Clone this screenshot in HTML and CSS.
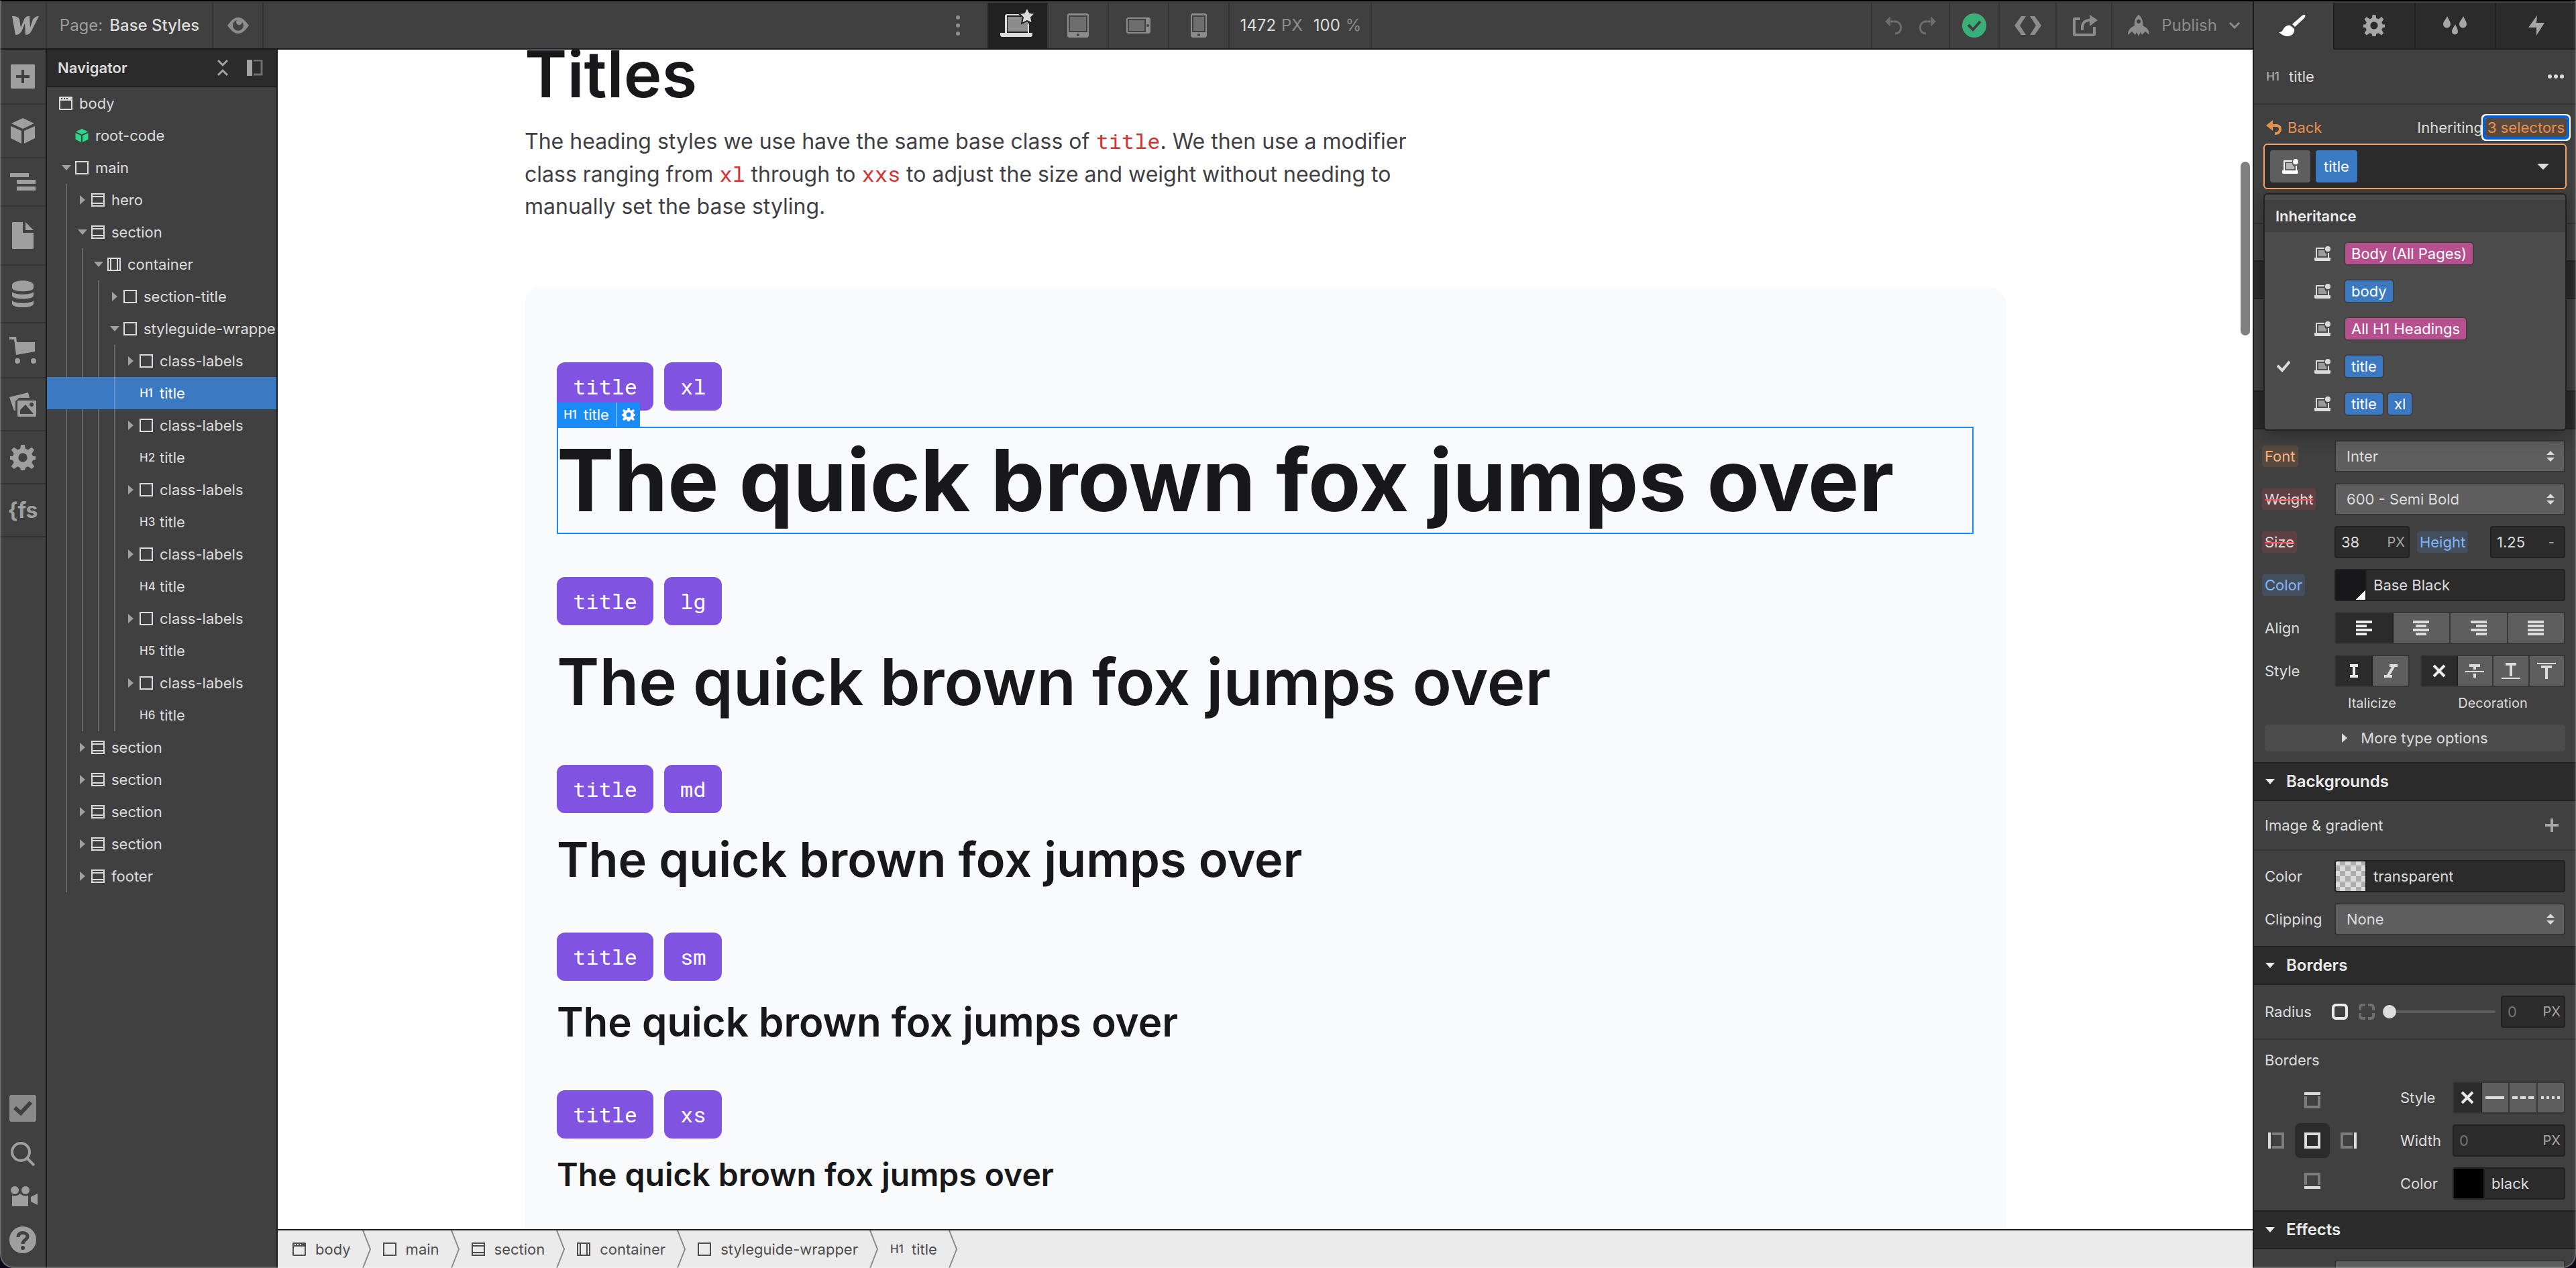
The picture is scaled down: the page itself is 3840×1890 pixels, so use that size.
FILE: index.html
```html
<!DOCTYPE html>
<html lang="en">
<head>
<meta charset="utf-8">
<title>Webflow - Base Styles</title>
<link rel="stylesheet" href="styles.css">
</head>
<body>
<svg class="sprite" aria-hidden="true">
  <symbol id="i-body" viewBox="0 0 20 20"><path fill="currentColor" fill-rule="evenodd" d="M1 0h18l1 1v18l-1 1H1l-1-1V1zM2 6v12h16V6zM3 2v2h2V2zM7 2v2h2V2zM11 2v2h2V2z"/></symbol>
  <symbol id="i-div" viewBox="0 0 20 20"><path fill="none" stroke="currentColor" stroke-width="2" d="M1 1h18v18H1z"/></symbol>
  <symbol id="i-section" viewBox="0 0 20 20"><path fill="none" stroke="currentColor" stroke-width="2" d="M1 1h18v18H1zM1 5h18M1 15h18"/></symbol>
  <symbol id="i-container" viewBox="0 0 20 20"><path fill="none" stroke="currentColor" stroke-width="2" d="M1 1h18v18H1zM5 1v18M15 1v18"/></symbol>
  <symbol id="i-cube" viewBox="0 0 36 38"><path fill="currentColor" d="M18 0l17 8-17 8L1 8zM0 12l16 7v19L0 30zM36 12l-16 7v19l16-8z"/></symbol>
  <symbol id="i-down" viewBox="0 0 14 8"><path fill="currentColor" d="M0 0h14L7 8z"/></symbol>
  <symbol id="i-right" viewBox="0 0 8 14"><path fill="currentColor" d="M0 0v14l8-7z"/></symbol>
  <symbol id="i-sort" viewBox="0 0 12 16"><path fill="currentColor" d="M0 6l6-6 6 6zM0 10l6 6 6-6z"/></symbol>
  <symbol id="i-gear" viewBox="0 0 40 40"><path fill="currentColor" fill-rule="evenodd" d="M17 0h6l1 6 4 2 6-4 4 4-4 6 2 4 6 0v5l-6 1-2 4 4 6-4 4-6-4-4 2-1 6h-6l-1-6-4-2-6 4-4-4 4-6-2-4-6-1v-5l6 0 2-4-4-6 4-4 6 4 4-2zM20 13a7 7 0 1 0 0 14a7 7 0 1 0 0-14z"/></symbol>
  <symbol id="i-device" viewBox="0 0 24 22"><path fill="currentColor" d="M2 3a1 1 0 0 1 1-1h12v2H4v13h16V10h2v7h2v4l-1 1H1l-1-1v-4h2z"/><path fill="currentColor" opacity=".55" d="M6 6h9c0 3 1 4 3 5v4H6z"/><circle cx="20" cy="4" r="4" fill="currentColor"/></symbol>
  <symbol id="i-x" viewBox="0 0 20 20"><path fill="none" stroke="currentColor" stroke-width="4" d="M2 2l16 16M18 2L2 18"/></symbol>
</svg>

<div class="app">
  <div class="workspace">
    <header class="topbar">
      <button class="logo" aria-label="Webflow menu"><svg width="40" height="28" viewBox="0 0 40 28"><path fill="currentColor" d="M40 0c-4 0-7 2-9 5l-4 12L26 0c-4 0-7 2-8 5l-5 12-2-12C10 2 7 0 0 0l5 28c4 0 7-2 9-5l5-12 1 17c4 0 7-2 9-6z"/></svg></button>
      <button class="page-name"><span>Page:</span> Base Styles</button>
      <button class="preview" aria-label="Preview"><svg width="32" height="24" viewBox="0 0 32 24"><path fill="currentColor" fill-rule="evenodd" d="M0 12C6 4 10 0 16 0s10 4 16 12c-6 8-10 12-16 12S6 20 0 12zM14 4a8 8 0 1 0 10 8a8 8 0 0 0-2-5 4.500 4.500 0 1 1-8-3z"/></svg></button>
      <div class="space-left"></div>
      <button class="dots" aria-label="More breakpoints"><svg width="6" height="30" viewBox="0 0 6 30"><path fill="currentColor" d="M3 0a3 3 0 1 1 0 6a3 3 0 1 1 0-6zM3 12a3 3 0 1 1 0 6a3 3 0 1 1 0-6zM3 24a3 3 0 1 1 0 6a3 3 0 1 1 0-6z"/></svg></button>
      <button class="device on" aria-label="Desktop"><svg width="52" height="46" viewBox="0 0 52 46"><path fill="#8c8c8c" d="M11 14h30v22H11z"/><path fill="#dcdcdc" d="M7 12l2-2h24v2H10v26h31V24h2v14h5v4l-2 2H2l-2-2v-4h7z"/><path fill="#dcdcdc" stroke="#212121" stroke-width="2" d="M40 0l4 8 8 1-6 6 2 9-8-4-8 4 2-9-6-6 8-1z"/></svg></button>
      <button class="device" aria-label="Tablet"><svg width="32" height="36" viewBox="0 0 32 36"><path fill="currentColor" fill-rule="evenodd" d="M2 0h28l2 2v32l-2 2H2l-2-2V2zM2 3v25h28V3zM16 30a2 2 0 1 0 0 4a2 2 0 1 0 0-4z"/><path fill="#6e6e6e" d="M4 5h24v21H4z"/></svg></button>
      <button class="device" aria-label="Mobile landscape"><svg width="36" height="24" viewBox="0 0 36 24"><path fill="currentColor" fill-rule="evenodd" d="M2 0h32l2 2v20l-2 2H2l-2-2V2zM2 2v20h27V2zM32 10a2 2 0 1 0 0 4a2 2 0 1 0 0-4z"/><path fill="#6e6e6e" d="M4 4h23v16H4z"/></svg></button>
      <button class="device" aria-label="Mobile portrait"><svg width="24" height="36" viewBox="0 0 24 36"><path fill="currentColor" fill-rule="evenodd" d="M2 0h20l2 2v32l-2 2H2l-2-2V2zM2 3v25h20V3zM12 30a2 2 0 1 0 0 4a2 2 0 1 0 0-4z"/><path fill="#6e6e6e" d="M4 5h16v21H4z"/></svg></button>
      <button class="size">1472 <span>PX</span><b>100</b> <span>%</span></button>
      <div class="space-right"></div>
      <div class="history">
        <button aria-label="Undo"><svg width="26" height="28" viewBox="0 0 26 28"><path fill="none" stroke="currentColor" stroke-width="3" d="M6 8h10c11 2 10 18-1 18"/><path fill="currentColor" d="M0 8l8-8v16z"/></svg></button>
        <button aria-label="Redo"><svg width="26" height="28" viewBox="0 0 26 28"><path fill="none" stroke="currentColor" stroke-width="3" d="M20 8H10C-1 10 0 26 11 26"/><path fill="currentColor" d="M26 8l-8-8v16z"/></svg></button>
      </div>
      <button class="status" aria-label="Saved"><svg width="36" height="36" viewBox="0 0 36 36"><circle cx="18" cy="18" r="18" fill="#3aaf78"/><path fill="none" stroke="#404040" stroke-width="4" d="M9 17l7 7 11-12"/></svg></button>
      <button class="code" aria-label="Export code"><svg width="40" height="28" viewBox="0 0 40 28"><path fill="currentColor" d="M10 0h7L8 14l9 14h-7L0 14zM23 0h7l10 14-10 14h-7l9-14z"/></svg></button>
      <button class="share" aria-label="Share"><svg width="40" height="32" viewBox="0 0 40 32"><path fill="currentColor" d="M3 4h9v4H5v20h26V18h4v12l-2 2H3l-2-2V6z"/><path fill="none" stroke="currentColor" stroke-width="4" d="M15 23c-1-10 3-15 12-15"/><path fill="currentColor" d="M26 0l12 8-12 9z"/></svg></button>
      <button class="publish"><svg width="32" height="32" viewBox="0 0 32 32"><path fill="currentColor" fill-rule="evenodd" d="M16 0c5 4 7 10 6 16l5 3c4 3 5 7 5 11l-6-5-5 5-2-4-3 6-3-6-2 4-5-5-6 5c0-4 1-8 5-11l5-3C9 10 11 4 16 0zm0 7a3 3 0 1 0 0 6a3 3 0 1 0 0-6z"/></svg>Publish<svg width="16" height="10" viewBox="0 0 16 10"><path fill="none" stroke="currentColor" stroke-width="3" d="M1 1l7 7 7-7"/></svg></button>
    </header>

    <div class="middle">
      <nav class="rail">
        <button class="h-add" aria-label="Add"><svg width="36" height="36" viewBox="0 0 36 36"><path fill="currentColor" fill-rule="evenodd" d="M1 0h34l1 1v34l-1 1H1l-1-1V1zM16 8v8H8v4h8v8h4v-8h8v-4h-8V8z"/></svg></button>
        <button class="h-sym" aria-label="Symbols"><svg width="36" height="38"><use href="#i-cube"/></svg></button>
        <button class="h-nav" aria-label="Navigator"><svg width="38" height="26" viewBox="0 0 38 26"><path fill="currentColor" d="M0 0h28v6H0zM10 10h28v6H10zM10 20h28v6H10z"/></svg></button>
        <button class="h-page" aria-label="Pages"><svg width="32" height="40" viewBox="0 0 32 40"><path fill="currentColor" d="M1 0h15v16h16v23l-1 1H1l-1-1V1zM20 0l12 12H20z"/></svg></button>
        <button class="h-db" aria-label="CMS"><svg width="32" height="40" viewBox="0 0 32 40"><path fill="currentColor" d="M0 7C0-2 32-2 32 7v4C32 18 0 18 0 11zM0 17c4 5 28 5 32 0v6c-2 6-30 6-32 0zM0 30c4 5 28 5 32 0v5c-2 7-30 7-32 0z"/></svg></button>
        <button class="h-cart" aria-label="Ecommerce"><svg width="40" height="40" viewBox="0 0 40 40"><path fill="currentColor" d="M0 0h10l1 8h27v14L10 27 7 4H0z"/><circle cx="12" cy="36" r="4" fill="currentColor"/><circle cx="36" cy="36" r="4" fill="currentColor"/></svg></button>
        <button class="h-item" aria-label="Assets"><svg width="40" height="36" viewBox="0 0 40 36"><path fill="currentColor" d="M0 7L28 0l2 8H14L9 13v14H7z"/><path fill="currentColor" fill-rule="evenodd" d="M13 12h26l1 1v22l-1 1H13l-1-1V13zM16 32h20L24 18l-8 8zM33 15a3 3 0 1 0 0 6a3 3 0 1 0 0-6z"/></svg></button>
        <button class="h-item" aria-label="Settings"><svg width="38" height="38"><use href="#i-gear"/></svg></button>
        <button class="h-item fs" aria-label="Finsweet">{fs</button>
        <div class="rail-foot">
          <button aria-label="Audit"><svg width="40" height="40" viewBox="0 0 40 40"><path fill="#8a8a8a" d="M2 0h36l2 2v36l-2 2H2l-2-2V2z"/><path fill="none" stroke="#404040" stroke-width="6" d="M8 19l9 8 15-16"/></svg></button>
          <button aria-label="Search"><svg width="36" height="36" viewBox="0 0 36 36"><circle cx="15" cy="15" r="13" fill="none" stroke="currentColor" stroke-width="4"/><path fill="none" stroke="currentColor" stroke-width="4" d="M24 24l11 11"/></svg></button>
          <button aria-label="Tutorials"><svg width="44" height="30" viewBox="-4 0 44 30"><circle cx="6" cy="6" r="6" fill="currentColor"/><circle cx="22" cy="6" r="6" fill="currentColor"/><path fill="currentColor" d="M2 14c4 2 9 0 12-3 3 3 8 5 12 3v16H2zM30 16l10-5v17l-10-5z"/></svg></button>
          <button aria-label="Help"><svg width="40" height="40" viewBox="0 0 40 40"><circle cx="20" cy="20" r="20" fill="currentColor"/><path fill="none" stroke="#404040" stroke-width="5" d="M13 16c0-9 14-8 14-1 0 5-7 5-7 11"/><circle cx="20" cy="32" r="3" fill="#404040"/></svg></button>
        </div>
      </nav>

      <aside class="navigator">
        <div class="nav-head">
          <h2>Navigator</h2>
          <button aria-label="Collapse all"><svg width="16" height="24" viewBox="0 0 16 24"><path fill="none" stroke="currentColor" stroke-width="3" d="M1 1l7 7 7-7M1 23l7-7 7 7"/></svg></button>
          <button aria-label="Dock"><svg width="24" height="24" viewBox="0 0 24 24"><path fill="currentColor" d="M0 0h8v24H0z"/><path fill="none" stroke="#6e6e6e" stroke-width="3" d="M10 1h12v21H10"/></svg></button>
        </div>
        <ul class="tree">
          <li>
            <div class="row root"><svg class="el"><use href="#i-body"/></svg>body</div>
            <ul class="d1">
              <li><div class="row"><i></i><svg class="el green"><use href="#i-cube"/></svg>root-code</div></li>
              <li>
                <div class="row"><i><svg class="down"><use href="#i-down"/></svg></i><svg class="el"><use href="#i-div"/></svg>main</div>
                <ul class="d2">
                  <li><div class="row"><i><svg class="right"><use href="#i-right"/></svg></i><svg class="el"><use href="#i-section"/></svg>hero</div></li>
                  <li>
                    <div class="row"><i><svg class="down"><use href="#i-down"/></svg></i><svg class="el"><use href="#i-section"/></svg>section</div>
                    <ul class="d3">
                      <li>
                        <div class="row"><i><svg class="down"><use href="#i-down"/></svg></i><svg class="el"><use href="#i-container"/></svg>container</div>
                        <ul class="d4">
                          <li><div class="row"><i><svg class="right"><use href="#i-right"/></svg></i><svg class="el"><use href="#i-div"/></svg>section-title</div></li>
                          <li>
                            <div class="row"><i><svg class="down"><use href="#i-down"/></svg></i><svg class="el"><use href="#i-div"/></svg>styleguide-wrapper</div>
                            <ul class="d5">
                              <li><div class="row"><i><svg class="right"><use href="#i-right"/></svg></i><svg class="el"><use href="#i-div"/></svg>class-labels</div></li>
                              <li><div class="row selected"><i></i><span class="h">H1</span>title</div></li>
                              <li><div class="row"><i><svg class="right"><use href="#i-right"/></svg></i><svg class="el"><use href="#i-div"/></svg>class-labels</div></li>
                              <li><div class="row"><i></i><span class="h">H2</span>title</div></li>
                              <li><div class="row"><i><svg class="right"><use href="#i-right"/></svg></i><svg class="el"><use href="#i-div"/></svg>class-labels</div></li>
                              <li><div class="row"><i></i><span class="h">H3</span>title</div></li>
                              <li><div class="row"><i><svg class="right"><use href="#i-right"/></svg></i><svg class="el"><use href="#i-div"/></svg>class-labels</div></li>
                              <li><div class="row"><i></i><span class="h">H4</span>title</div></li>
                              <li><div class="row"><i><svg class="right"><use href="#i-right"/></svg></i><svg class="el"><use href="#i-div"/></svg>class-labels</div></li>
                              <li><div class="row"><i></i><span class="h">H5</span>title</div></li>
                              <li><div class="row"><i><svg class="right"><use href="#i-right"/></svg></i><svg class="el"><use href="#i-div"/></svg>class-labels</div></li>
                              <li><div class="row"><i></i><span class="h">H6</span>title</div></li>
                            </ul>
                          </li>
                        </ul>
                      </li>
                    </ul>
                  </li>
                  <li><div class="row"><i><svg class="right"><use href="#i-right"/></svg></i><svg class="el"><use href="#i-section"/></svg>section</div></li>
                  <li><div class="row"><i><svg class="right"><use href="#i-right"/></svg></i><svg class="el"><use href="#i-section"/></svg>section</div></li>
                  <li><div class="row"><i><svg class="right"><use href="#i-right"/></svg></i><svg class="el"><use href="#i-section"/></svg>section</div></li>
                  <li><div class="row"><i><svg class="right"><use href="#i-right"/></svg></i><svg class="el"><use href="#i-section"/></svg>section</div></li>
                  <li><div class="row"><i><svg class="right"><use href="#i-right"/></svg></i><svg class="el"><use href="#i-section"/></svg>footer</div></li>
                </ul>
              </li>
            </ul>
          </li>
        </ul>
      </aside>

      <div class="stage">
        <main class="canvas">
          <div class="content">
            <h1 class="heading">Titles</h1>
            <p class="intro">The heading styles we use have the same base class of <code>title</code>. We then use a modifier class ranging from <code>xl</code> through to <code>xxs</code> to adjust the size and weight without needing to manually set the base styling.</p>
            <div class="guide">
              <div class="labels"><code>title</code><code>xl</code></div>
              <div class="picked">
                <div class="badge"><span class="h">H1</span><span>title</span><button aria-label="Element settings"><svg width="20" height="20"><use href="#i-gear"/></svg></button></div>
                <h1 class="title xl">The quick brown fox jumps over</h1>
              </div>
              <div class="labels"><code>title</code><code>lg</code></div>
              <h2 class="title lg">The quick brown fox jumps over</h2>
              <div class="labels"><code>title</code><code>md</code></div>
              <h3 class="title md">The quick brown fox jumps over</h3>
              <div class="labels"><code>title</code><code>sm</code></div>
              <h4 class="title sm">The quick brown fox jumps over</h4>
              <div class="labels"><code>title</code><code>xs</code></div>
              <h5 class="title xs">The quick brown fox jumps over</h5>
            </div>
          </div>
          <div class="scrollbar"></div>
        </main>
        <nav class="crumbs">
          <a href="#body"><svg class="el"><use href="#i-body"/></svg>body</a>
          <svg class="sep" viewBox="0 0 13 56"><path fill="none" stroke="#8c8c8c" stroke-width="2" d="M1 0l11 28L1 56"/></svg>
          <a href="#main"><svg class="el"><use href="#i-div"/></svg>main</a>
          <svg class="sep" viewBox="0 0 13 56"><path fill="none" stroke="#8c8c8c" stroke-width="2" d="M1 0l11 28L1 56"/></svg>
          <a href="#section"><svg class="el"><use href="#i-section"/></svg>section</a>
          <svg class="sep" viewBox="0 0 13 56"><path fill="none" stroke="#8c8c8c" stroke-width="2" d="M1 0l11 28L1 56"/></svg>
          <a href="#container"><svg class="el"><use href="#i-container"/></svg>container</a>
          <svg class="sep" viewBox="0 0 13 56"><path fill="none" stroke="#8c8c8c" stroke-width="2" d="M1 0l11 28L1 56"/></svg>
          <a href="#wrapper"><svg class="el"><use href="#i-div"/></svg>styleguide-wrapper</a>
          <svg class="sep" viewBox="0 0 13 56"><path fill="none" stroke="#8c8c8c" stroke-width="2" d="M1 0l11 28L1 56"/></svg>
          <a href="#title"><span class="h">H1</span>title</a>
          <svg class="sep" viewBox="0 0 13 56"><path fill="none" stroke="#8c8c8c" stroke-width="2" d="M1 0l11 28L1 56"/></svg>
        </nav>
      </div>
    </div>
  </div>

  <aside class="styles">
    <div class="tabs">
      <button class="on" aria-label="Style"><svg width="40" height="32" viewBox="0 0 40 32"><path fill="currentColor" d="M39 0c1 2 0 4-2 6L24 18l-4-4L35 1c2-1 3-1 4-1zM17 16l6 5c1 6-3 10-9 11-6 0-9-2-14-6 4 0 5-1 7-5 2-3 5-6 10-5z"/></svg></button>
      <button aria-label="Settings"><svg width="32" height="32"><use href="#i-gear"/></svg></button>
      <button aria-label="Style manager"><svg width="36" height="28" viewBox="0 0 36 28"><path fill="currentColor" d="M6 0c2 5 5 8 5 12a5 5 0 0 1-11 0C0 8 4 5 6 0zM30 0c2 5 5 8 5 12a5 5 0 0 1-11 0C24 8 28 5 30 0zM18 12c2 5 4 7 4 11a4 4 0 0 1-9 0c0-4 3-6 5-11z"/></svg></button>
      <button aria-label="Interactions"><svg width="24" height="30" viewBox="0 0 24 30"><path fill="currentColor" d="M13 0l-1 11h12L12 30v-12H0z"/></svg></button>
    </div>
    <div class="crown"><span class="h">H1</span><span class="name">title</span><button aria-label="More"><svg width="24" height="6" viewBox="0 0 24 6"><path fill="currentColor" d="M3 0a3 3 0 1 1 0 6a3 3 0 1 1 0-6zM12 0a3 3 0 1 1 0 6a3 3 0 1 1 0-6zM21 0a3 3 0 1 1 0 6a3 3 0 1 1 0-6z"/></svg></button></div>
    <div class="selector">
      <div class="inherit">
        <button class="back"><svg width="24" height="22" viewBox="0 0 24 22"><path fill="none" stroke="currentColor" stroke-width="4" d="M7 8h9c7 0 7 12-2 12h-1"/><path fill="currentColor" d="M0 8l10-8v16z"/></svg>Back</button>
        <span class="inheriting">Inheriting</span><button class="count">3 selectors</button>
      </div>
      <div class="field">
        <button class="dev" aria-label="All breakpoints"><svg class="laptop"><use href="#i-device"/></svg></button>
        <span class="chip">title</span>
        <button class="caret" aria-label="Open"><svg width="18" height="9" viewBox="0 0 18 9"><path fill="currentColor" d="M0 0h18L9 9z"/></svg></button>
        <div class="menu">
          <h3>Inheritance</h3>
          <ul>
            <li><i></i><svg class="laptop"><use href="#i-device"/></svg><span class="tag pink">Body (All Pages)</span></li>
            <li><i></i><svg class="laptop"><use href="#i-device"/></svg><span class="tag">body</span></li>
            <li><i></i><svg class="laptop"><use href="#i-device"/></svg><span class="tag pink">All H1 Headings</span></li>
            <li><i><svg width="20" height="18" viewBox="0 0 20 18"><path fill="none" stroke="currentColor" stroke-width="4" d="M1 8l7 7L19 2"/></svg></i><svg class="laptop"><use href="#i-device"/></svg><span class="tag">title</span></li>
            <li><i></i><svg class="laptop"><use href="#i-device"/></svg><span class="tag">title</span><span class="tag">xl</span></li>
          </ul>
        </div>
      </div>
    </div>
    <div class="shut"></div>
    <div class="group empty"></div>
    <div class="blank"></div>
    <div class="group empty"></div>

    <section class="props">
      <div class="prop"><label class="orange" for="font">Font</label><div class="pick"><select id="font"><option>Inter</option></select><svg><use href="#i-sort"/></svg></div></div>
      <div class="prop"><label class="red" for="weight">Weight</label><div class="pick"><select id="weight"><option>600 - Semi Bold</option></select><svg><use href="#i-sort"/></svg></div></div>
      <div class="prop"><label class="red" for="size">Size</label>
        <div class="pair"><div class="num"><input id="size" value="38"><span>PX</span></div><label class="blue" for="height">Height</label><div class="num"><input id="height" value="1.25"><span class="dash">-</span></div></div></div>
      <div class="prop"><label class="blue" for="color">Color</label><div class="color"><span class="swatch ink"></span><input id="color" value="Base Black"></div></div>
      <div class="prop"><span>Align</span>
        <div class="seg">
          <button class="on" aria-label="Left"><svg width="24" height="22"><path fill="currentColor" d="M0 0h24v4H0zM0 6h16v4H0zM0 12h24v4H0zM0 18h16v4H0z"/></svg></button>
          <button aria-label="Center"><svg width="24" height="22"><path fill="currentColor" d="M0 0h24v4H0zM4 6h16v4H4zM0 12h24v4H0zM4 18h16v4H4z"/></svg></button>
          <button aria-label="Right"><svg width="24" height="22"><path fill="currentColor" d="M0 0h24v4H0zM8 6h16v4H8zM0 12h24v4H0zM8 18h16v4H8z"/></svg></button>
          <button aria-label="Justify"><svg width="24" height="22"><path fill="currentColor" d="M0 0h24v4H0zM0 6h24v4H0zM0 12h24v4H0zM0 18h24v4H0z"/></svg></button>
        </div></div>
      <div class="prop"><span>Style</span>
        <div class="duo">
          <div class="seg">
            <button class="on" aria-label="Regular"><svg width="12" height="20"><path fill="currentColor" d="M0 0h12v4H8v12h4v4H0v-4h4V4H0z"/></svg></button>
            <button aria-label="Italic"><svg width="20" height="20"><path fill="currentColor" d="M8 0h12v4h-4L9 16h3v4H0v-4h4l7-12H8z"/></svg></button>
          </div>
          <div class="seg">
            <button class="on" aria-label="None"><svg width="20" height="20"><use href="#i-x"/></svg></button>
            <button aria-label="Strikethrough"><svg width="28" height="20"><path fill="currentColor" d="M6 0h16v4h-6v4h-4V4H6zM0 10h28v2H0zM12 14h4v6h-4z"/></svg></button>
            <button aria-label="Underline"><svg width="28" height="24"><path fill="currentColor" d="M6 0h16v4h-6v16h-4V4H6zM0 22h28v2H0z"/></svg></button>
            <button aria-label="Overline"><svg width="28" height="24"><path fill="currentColor" d="M0 0h28v2H0zM6 4h16v4h-6v16h-4V8H6z"/></svg></button>
          </div>
        </div></div>
      <div class="captions duo"><span>Italicize</span><span>Decoration</span></div>
      <button class="more"><svg width="8" height="16" viewBox="0 0 8 14"><use href="#i-right"/></svg>More type options</button>
    </section>

    <h2 class="group"><svg class="tri"><use href="#i-down"/></svg>Backgrounds</h2>
    <div class="adder"><span>Image &amp; gradient</span><button aria-label="Add background"><svg width="20" height="20"><path fill="currentColor" d="M8 0h4v8h8v4h-8v8H8v-8H0V8h8z"/></svg></button></div>
    <section class="props">
      <div class="prop"><label for="bg">Color</label><div class="color"><span class="swatch clear"></span><input id="bg" value="transparent"></div></div>
      <div class="prop"><label for="clip">Clipping</label><div class="pick"><select id="clip"><option>None</option></select><svg><use href="#i-sort"/></svg></div></div>
    </section>

    <h2 class="group"><svg class="tri"><use href="#i-down"/></svg>Borders</h2>
    <div class="radius">
      <label for="radius">Radius</label>
      <button aria-label="All corners"><svg width="24" height="24"><rect x="2" y="2" width="20" height="20" rx="4" fill="none" stroke="#ebebeb" stroke-width="4"/></svg></button>
      <button aria-label="Single corners"><svg width="24" height="24"><path fill="none" stroke="#6e6e6e" stroke-width="4" d="M2 10V6q0-4 4-4h4M14 2h4q4 0 4 4v4M22 14v4q0 4-4 4h-4M10 22H6q-4 0-4-4v-4"/></svg></button>
      <input type="range" min="0" max="100" value="0" aria-label="Radius amount">
      <div class="num"><input id="radius" placeholder="0"><span>PX</span></div>
    </div>
    <section class="edges">
      <h3>Borders</h3>
      <div class="edge-grid">
        <div class="sides">
          <span></span><button aria-label="Top"><svg width="24" height="24"><path fill="#dcdcdc" d="M0 0h24v4H0z"/><path fill="#7c7c7c" d="M0 6h4v14h16V6h4v18H0z"/></svg></button><span></span>
          <button aria-label="Left"><svg width="24" height="24"><path fill="#dcdcdc" d="M0 0h4v24H0z"/><path fill="#7c7c7c" d="M6 0h18v24H6v-4h14V4H6z"/></svg></button>
          <button class="all" aria-label="All sides"><svg width="24" height="24"><path fill="none" stroke="#dcdcdc" stroke-width="4" d="M2 2h20v20H2z"/></svg></button>
          <button aria-label="Right"><svg width="24" height="24"><path fill="#dcdcdc" d="M20 0h4v24h-4z"/><path fill="#7c7c7c" d="M18 0H0v24h18v-4H4V4h14z"/></svg></button>
          <span></span><button aria-label="Bottom"><svg width="24" height="24"><path fill="#dcdcdc" d="M0 20h24v4H0z"/><path fill="#7c7c7c" d="M0 18V0h24v18h-4V4H4v14z"/></svg></button><span></span>
        </div>
        <div class="edge-props">
          <span>Style</span>
          <div class="seg">
            <button class="on" aria-label="None"><svg width="20" height="20"><use href="#i-x"/></svg></button>
            <button aria-label="Solid"><svg width="28" height="4"><path fill="currentColor" d="M0 0h28v4H0z"/></svg></button>
            <button aria-label="Dashed"><svg width="32" height="4"><path fill="currentColor" d="M0 0h8v4H0zM12 0h8v4h-8zM24 0h8v4h-8z"/></svg></button>
            <button aria-label="Dotted"><svg width="28" height="4"><path fill="currentColor" d="M0 0h4v4H0zM8 0h4v4H8zM16 0h4v4h-4zM24 0h4v4h-4z"/></svg></button>
          </div>
          <label for="bw">Width</label><div class="num"><input id="bw" placeholder="0"><span>PX</span></div>
          <label for="bc">Color</label><div class="color"><span class="swatch black"></span><input id="bc" value="black"></div>
        </div>
      </div>
    </section>

    <h2 class="group"><svg class="tri"><use href="#i-down"/></svg>Effects</h2>
    <section class="props">
      <div class="prop"><span></span><div class="pick"><select aria-label="Blending"><option></option></select></div></div>
    </section>
  </aside>
</div>
</body>
</html>
```
FILE: styles.css
```css
* { box-sizing: border-box; }
body {
  margin: 0;
  background: #0d0518;
  color: #dcdcdc;
  font: 400 22px/32px Inter, "Liberation Sans", sans-serif;
}
h1, h2, h3, h4, h5, p, ul { margin: 0; padding: 0; font: inherit; }
ul { list-style: none; }
i { font-style: normal; }
button {
  margin: 0; padding: 0; border: 0; background: none;
  color: inherit; font: inherit;
  display: flex; align-items: center; justify-content: center;
}
input, select { font: inherit; color: inherit; }
svg { display: block; flex: none; }
.sprite { position: absolute; width: 0; height: 0; }
.el { width: 20px; height: 20px; }
.h { flex: none; width: 20px; font-size: 17px; font-weight: 500; text-align: center; }

.app {
  position: relative;
  display: flex;
  height: 100vh;
  overflow: hidden;
  border-radius: 0 0 20px 20px;
  background: #404040;
}
.app::after {
  content: "";
  position: absolute; inset: 0; z-index: 9;
  border: 2px solid rgba(255, 255, 255, .22);
  border-top: 2px solid #000;
  border-radius: 0 0 20px 20px;
  pointer-events: none;
}
.workspace { flex: 1; min-width: 0; display: flex; flex-direction: column; }

/* top bar */
.topbar {
  flex: none; display: flex; height: 74px; padding-top: 4px;
  border-bottom: 2px solid #1b1b1b;
  color: #8c8c8c; font-size: 24px;
}
.topbar > button, .history { border-right: 2px solid #333; }
.logo { width: 70px; padding-left: 8px; color: #a3a3a3; }
.page-name { width: 248px; gap: 10px; color: #dcdcdc; font-size: 24px; }
.topbar .page-name { font-weight: 500; }
.page-name span { color: #9c9c9c; font-weight: 400; }
.preview { width: 75px; }
.space-left { flex: 4; }
.space-right { flex: 3; border-right: 2px solid #333; }
.dots { width: 88px; }
.device { width: 90px; }
.device.on { background: #212121; }
.device.on svg { margin-bottom: 8px; }
.size { width: 212px; padding-left: 2px; gap: 8px; color: #dcdcdc; }
.size b { margin-left: 8px; font-weight: 400; }
.size span { color: #8c8c8c; }
.history { width: 116px; display: flex; justify-content: center; gap: 24px; color: #6e6e6e; }
.status { width: 74px; }
.code { width: 85px; }
.share { width: 83px; padding-left: 4px; }
.topbar .publish { width: 209px; padding-left: 4px; gap: 18px; border: 0; }

.middle { flex: 1; min-height: 0; display: flex; }

/* icon rail */
.rail {
  flex: none; width: 70px; display: flex; flex-direction: column;
  border-right: 2px solid #1b1b1b; color: #9f9f9f;
}
.rail > button { border-bottom: 2px solid #333; }
.h-add { height: 82px; }
.h-sym { height: 80px; }
.h-nav { height: 72px; }
.h-page { height: 88px; }
.h-db { height: 86px; }
.h-cart { height: 82px; }
.h-item { height: 79px; }
.fs { font-size: 32px; font-weight: 700; }
.rail-foot {
  margin-top: auto; padding-bottom: 22px;
  display: flex; flex-direction: column; align-items: center; gap: 30px;
}

/* navigator */
.navigator { flex: none; width: 344px; border-right: 2px solid #1b1b1b; overflow: hidden; }
.nav-head {
  display: flex; align-items: center; gap: 28px; height: 56px;
  padding: 0 20px 0 16px; background: #2b2b2b; border-bottom: 2px solid #212121; color: #a3a3a3;
}
.nav-head h2 { flex: 1; color: #dcdcdc; font-size: 22px; font-weight: 600; }
.tree ul { position: relative; }
.d2::before, .d3::before, .d4::before, .d5::before {
  content: ""; position: absolute; top: 0; bottom: 0; width: 2px; background: rgba(255, 255, 255, .2);
}
.d2::before { left: 28px; }
.d3::before { left: 52px; }
.d4::before { left: 76px; }
.d5::before { left: 100px; }
.row { display: flex; align-items: center; gap: 10px; height: 48px; white-space: nowrap; }
.row i { flex: none; width: 14px; margin-right: -4px; display: flex; justify-content: center; color: #9f9f9f; }
.row.root { padding-left: 18px; }
.d1 .row { padding-left: 22px; }
.d2 .row { padding-left: 46px; }
.d3 .row { padding-left: 70px; }
.d4 .row { padding-left: 94px; }
.d5 .row { padding-left: 118px; }
.row.selected { background: #3b79c3; color: #fff; }
.down { width: 14px; height: 10px; }
.right { width: 8px; height: 14px; }
.green { color: #2bd889; }

/* canvas */
.stage { flex: 1; min-width: 0; display: flex; flex-direction: column; }
.canvas { position: relative; flex: 1; min-height: 0; overflow: hidden; background: #fff; color: #18181b; }
.content { width: 75%; margin: -24px auto 0; }
.heading { font-size: 96px; line-height: 120px; font-weight: 600; }
.intro { max-width: 1360px; margin: 16px 0 96px; font-size: 32px; line-height: 48px; color: #3f3f46; }
code { font-family: "Roboto Mono", "Liberation Mono", monospace; }
.intro code { color: #d23434; }
.guide { padding: 112px 48px; border-radius: 24px; background: #f9fafc; }
.labels { display: flex; gap: 16px; margin-bottom: 24px; }
.labels code {
  padding: 0 24px; border-radius: 12px; background: #8054e0; color: #fff;
  font-size: 32px; line-height: 72px;
}
.title { margin-bottom: 64px; font-weight: 600; white-space: nowrap; }
.picked { position: relative; margin-bottom: 64px; outline: 2px solid #1a8cf8; outline-offset: -2px; }
.title.xl { margin: 0; font-size: 128px; line-height: 160px; font-weight: 700; }
.lg { font-size: 96px; line-height: 120px; }
.md { font-size: 72px; line-height: 90px; }
.sm { font-size: 60px; line-height: 75px; }
.xs { font-size: 48px; line-height: 60px; }
.badge {
  position: absolute; left: 0; bottom: 100%; display: flex; align-items: center;
  height: 36px; padding-left: 10px; gap: 10px; background: #1a8cf8; color: #fff;
}
.badge button { width: 36px; height: 36px; border-left: 2px solid #69b3fb; }
.scrollbar {
  position: absolute; right: 4px; top: 167px; width: 14px; height: 259px;
  border-radius: 7px; background: #808080;
}
.crumbs {
  flex: none; display: flex; height: 58px; padding-left: 4px;
  border-top: 2px solid #1b1b1b; background: #ebebeb; color: #4d4d4d;
}
.crumbs a {
  display: flex; align-items: center; gap: 14px; padding: 0 17px 0 18px;
  color: inherit; text-decoration: none;
}
.crumbs .h { width: 18px; }
.sep { width: 13px; height: 56px; }

/* style panel */
.styles { flex: none; width: 482px; border-left: 2px solid #1b1b1b; overflow: hidden; }
.tabs { display: flex; height: 74px; padding-top: 4px; background: #404040; }
.tabs button {
  flex: 1; border-left: 2px solid #212121; border-bottom: 2px solid #212121;
  background: #2b2b2b; color: #a6a6a6;
}
.tabs .on { flex: none; width: 118px; padding-right: 4px; border-color: #404040; border-left: 0; background: #404040; color: #fff; }
.crown { display: flex; align-items: center; height: 82px; padding: 0 18px; gap: 14px; border-bottom: 2px solid #333; }
.crown .h { color: #b0b0b0; }
.name { flex: 1; }
.selector { height: 178px; padding: 16px 14px 0; border-bottom: 2px solid #333; }
.inherit { display: flex; align-items: center; height: 36px; margin-bottom: 6px; }
.back { gap: 8px; margin: 0 auto 0 4px; color: #e98f4e; }
.inheriting { margin-right: 4px; }
.count {
  height: 28px; padding: 0 3px; border-radius: 2px; background: #5a4a3e; color: #e98f4e;
  outline: 4px solid #0060df; box-shadow: 0 0 0 6px #fff;
}
.field {
  position: relative; display: flex; align-items: center; gap: 8px; height: 68px;
  padding: 0 24px 0 8px; border: 2px solid #f9a265; border-radius: 6px; background: #2b2b2b;
}
.dev { width: 60px; height: 48px; border-radius: 4px; background: #5e5e5e; color: #fff; }
.laptop { width: 24px; height: 22px; }
.chip { padding: 0 12px; border-radius: 4px; background: #3b79c3; color: #fff; line-height: 48px; }
.caret { margin-left: auto; }
.menu {
  position: absolute; z-index: 2; left: -2px; right: -2px; top: calc(100% + 8px);
  padding-top: 8px; border: 2px solid #212121; border-radius: 6px;
  background: #4c4c4c; box-shadow: 0 8px 24px rgba(0, 0, 0, .3);
}
.menu h3 { padding-left: 16px; background: #404040; color: #ebebeb; font-weight: 600; line-height: 48px; }
.menu ul { padding: 4px 0 10px; }
.menu li { display: flex; align-items: center; height: 56px; }
.menu i { width: 74px; padding-left: 18px; }
.menu .tag { margin-left: 22px; padding: 0 9px; border-radius: 4px; background: #3b79c3; color: #fff; line-height: 32px; box-shadow: 0 0 0 2px #404040; }
.menu .tag + .tag { margin-left: 8px; }
.menu .pink { background: #b6508e; }
.shut { height: 54px; }
.blank { height: 136px; }
.group {
  display: flex; align-items: center; gap: 16px; height: 58px; padding: 0 16px;
  border: solid #212121; border-width: 2px 0; background: #2b2b2b;
  color: #ebebeb; font-size: 24px; font-weight: 600;
}
.tri { width: 16px; height: 8px; }
.props { display: flex; flex-direction: column; gap: 16px; padding: 16px; }
.prop { display: grid; grid-template-columns: 104px 1fr; align-items: center; height: 48px; }
label { justify-self: start; }
.orange, .blue, .red { margin-left: -4px; padding: 0 4px; border-radius: 4px; }
.orange { background: #59483c; color: #f9b384; }
.blue { background: #434f5e; color: #82b6f8; }
.red { background: #5e4042; text-decoration: line-through 2px #ff4d61; }
.pick { position: relative; }
.pick select {
  display: block; width: 100%; height: 48px; padding: 0 16px; appearance: none;
  border: 2px solid #363636; border-radius: 4px; background: #5e5e5e;
}
.pick svg { position: absolute; right: 16px; top: 16px; width: 12px; height: 16px; pointer-events: none; }
.pair { display: flex; align-items: center; justify-content: space-between; }
.pair .num { width: 112px; }
.pair label { margin: 0 22px 0 0; }
.num, .color {
  display: flex; align-items: center; height: 48px; overflow: hidden;
  border: 2px solid #212121; border-radius: 4px; background: #2b2b2b;
}
.num input, .color input { flex: 1; width: 0; min-width: 0; height: 44px; padding: 0 8px; border: 0; background: none; }
.num input::placeholder { color: #757575; opacity: 1; }
.num span { flex: none; padding-right: 5px; color: #a6a6a6; font-size: 20px; }
.num .dash { padding-right: 14px; }
.swatch { flex: none; width: 46px; height: 44px; border-right: 2px solid #212121; }
.color input { padding-left: 10px; }
.ink { background: linear-gradient(135deg, #18181b 83%, #fff 84%); }
.clear { background: conic-gradient(#adadad 25%, #dcdcdc 0 50%, #adadad 0 75%, #dcdcdc 0) 6px 6px / 16px 16px; }
.black { background: #000; }
.seg { display: flex; gap: 2px; height: 48px; border: 2px solid #363636; border-radius: 4px; background: #363636; overflow: hidden; }
.seg button { flex: 1; background: #5e5e5e; }
.seg .on { background: #2b2b2b; color: #ebebeb; outline: 2px solid #212121; }
.duo { display: grid; grid-template-columns: 112px 1fr; gap: 16px; }
.captions { margin: -8px 0 0 104px; text-align: center; font-size: 20px; }
.more { height: 40px; gap: 20px; border-radius: 4px; background: #4c4c4c; }
.adder {
  display: flex; align-items: center; justify-content: space-between;
  height: 74px; padding: 0 26px 0 16px; border-bottom: 2px solid #363636;
}
.adder + .props { padding-top: 14px; }
.adder button { color: #a6a6a6; }
.radius {
  display: flex; align-items: center; padding: 16px; border-bottom: 2px solid #363636;
}
.radius label { width: 100px; }
.radius button + button { margin: 0 12px 0 16px; }
.radius .num { width: 96px; margin-left: 8px; }
input[type="range"] { width: 168px; height: 20px; margin: 0; appearance: none; background: none; }
input[type="range"]::-webkit-slider-runnable-track { height: 4px; border-radius: 2px; background: #5e5e5e; }
input[type="range"]::-webkit-slider-thumb { appearance: none; width: 20px; height: 20px; margin-top: -8px; border-radius: 50%; background: #dcdcdc; }
.edges { padding: 14px 16px 16px; }
.edges h3 { margin-bottom: 16px; }
.edge-grid { display: grid; grid-template-columns: 202px 1fr; }
.sides { display: grid; grid-template: repeat(3, 56px) / 34px 74px 34px; gap: 4px 0; place-items: center; }
.all { width: 52px; height: 52px; border-radius: 8px; background: #2b2b2b; }
.edge-props { display: grid; grid-template-columns: 78px 1fr; gap: 16px 0; align-items: center; }
```
